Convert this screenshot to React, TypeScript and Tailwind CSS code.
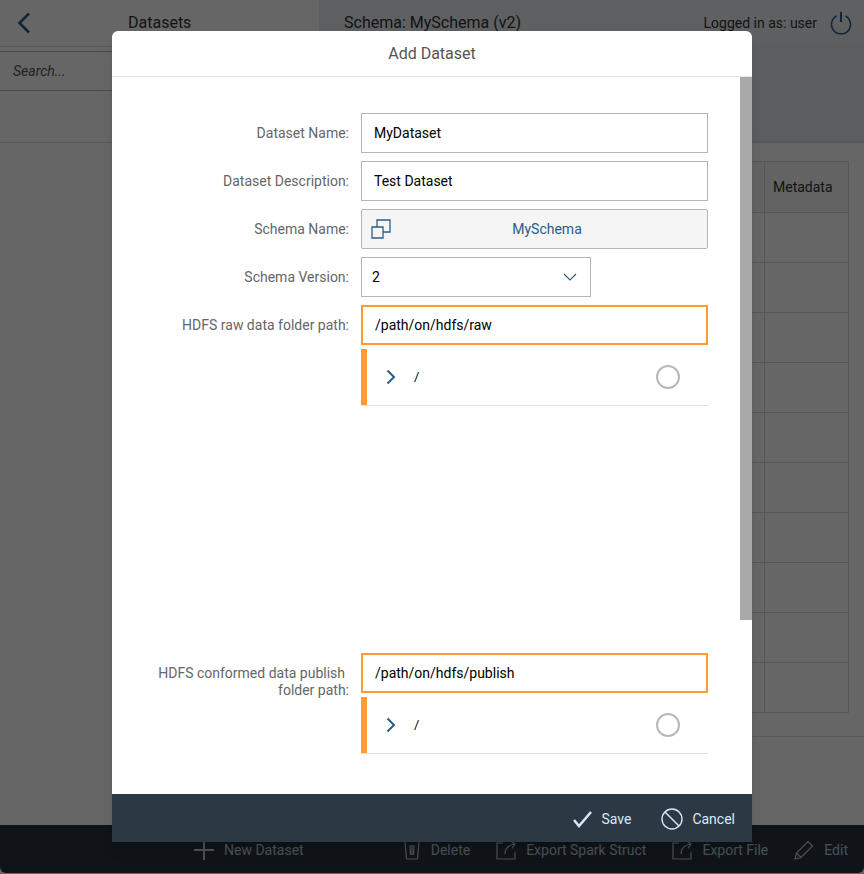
import React from "react";

const Row = ({ label, children }: { label: React.ReactNode; children: React.ReactNode }) => (
  <div className="flex items-start mb-2">
    <div className="w-[249px] h-10 shrink-0 pr-3 pt-[12px] text-right text-[#666666] leading-[17px]">{label}</div>
    {children}
  </div>
);

const Field = ({ value, orange }: { value: string; orange?: boolean }) => (
  <div className={`w-[347px] h-10 flex items-center bg-white text-black ${orange ? "border-2 border-[#ff9a36] pl-3" : "border border-[#b5b5b5] pl-3"}`}>{value}</div>
);

const Tree = () => (
  <div className="w-[347px] h-[57px] ml-[249px] mt-[-4px] flex items-center border-b border-[#e0e0e0] relative">
    <div className="w-1.5 h-[56px] bg-[#ff9a36] shrink-0" />
    <svg width="12" height="16" viewBox="0 0 12 16" className="ml-[18px]" fill="none" stroke="#2b5c87" strokeWidth="2"><path d="M2.5 1.5 9 8l-6.500 6.500" /></svg>
    <span className="ml-[17px] text-black text-[13px]">/</span>
    <div className="ml-auto mr-[28px] w-6 h-6 rounded-full border-2 border-[#b8b8b8]" />
  </div>
);

const DimBtn = ({ icon, label }: { icon: React.ReactNode; label: string }) => (
  <div className="flex items-center gap-[10px] text-[#b8c8d4]">{icon}<span>{label}</span></div>
);

const ExportIcon = () => (
  <svg width="20" height="20" viewBox="0 0 20 20" fill="none" stroke="#b8c8d4" strokeWidth="1.2"><path d="M7 3H1v16h18v-7" /><path d="M9 14c0-5 3-9 10-10M14 0.500 19 4l-3 4.500" /></svg>
);

export default function App() {
  return (
    <div className="relative w-[864px] h-[874px] overflow-hidden bg-white text-sm text-[#333333] font-['Roboto','Noto_Sans',sans-serif]">
      <div className="flex flex-col h-full pb-px">
        <div className="flex flex-1 min-h-0">
          <aside className="w-[320px] shrink-0 border-r border-[#e5e5e5] bg-white">
            <div className="h-[47px] flex items-center border-b border-[#dddddd] relative">
              <svg width="14" height="22" viewBox="0 0 14 22" className="ml-[17px]" fill="none" stroke="#2b5c87" strokeWidth="2.600"><path d="M12 1.500 2.500 11l9.500 9.500" /></svg>
              <span className="ml-[97px] text-base">Datasets</span>
            </div>
            <div className="h-[40px] mt-[4px] border-t border-b border-[#bbbbbb] flex items-center pl-[13px] italic text-[#555555]">Search...</div>
            <div className="h-[52px] border-b border-[#dddddd]" />
          </aside>
          <main className="flex-1 min-w-0 flex flex-col">
            <div className="bg-linear-to-b from-[#ecf0f2] to-[#dfe9f2]">
              <div className="h-[47px] border-b border-[#dde6ec] flex items-center pl-[24px] pr-[12px]">
                <span className="text-base">Schema: MySchema (v2)</span>
                <span className="ml-auto mr-[13px]">Logged in as: user</span>
                <svg width="22" height="24" viewBox="0 0 22 24" fill="none" stroke="#2b5c87" strokeWidth="1.500"><path d="M6.500 5a9.500 9.500 0 1 0 9 0" /><path d="M11 1v10" strokeWidth="2" /></svg>
              </div>
              <div className="h-[96px] border-b-2 border-[#cfdce6]" />
            </div>
            <div className="flex-1 pt-[18px]">
              <div className="mx-[15px] border-l border-t border-[#d8d8d8]">
                <div className="h-[51px] flex bg-[#f7f7f7] border-b border-[#d8d8d8]">
                  <div className="flex-1 border-r border-[#d8d8d8]" />
                  <div className="w-[84px] border-r border-[#d8d8d8] flex items-center pl-[8px]">Metadata</div>
                </div>
                {Array.from({ length: 10 }).map((_, i) => (
                  <div key={i} className="h-[50px] flex border-b border-[#d8d8d8]">
                    <div className="flex-1 border-r border-[#d8d8d8]" />
                    <div className="w-[84px] border-r border-[#d8d8d8]" />
                  </div>
                ))}
              </div>
              <div className="mt-[23px] h-px bg-[#d3dee8]" />
            </div>
          </main>
        </div>
        <footer className="h-[48px] pt-px bg-[#283440] flex items-center justify-end pr-[16px] shrink-0 rounded-b-md">
          <div className="flex items-center mr-auto ml-[194px]">
            <DimBtn label="New Dataset" icon={<svg width="20" height="20" viewBox="0 0 20 20" stroke="#b8c8d4" strokeWidth="2"><path d="M10 0v20M0 10h20" /></svg>} />
          </div>
          <div className="flex items-center gap-[26px]">
            <DimBtn label="Delete" icon={<svg width="18" height="20" viewBox="0 0 18 20" fill="none" stroke="#b8c8d4" strokeWidth="1.200"><path d="M0 1h18M2 1l1.500 18h11L16 1M7 5l.5 10M11 5l-.5 10M9 5v10" /></svg>} />
            <DimBtn label="Export Spark Struct" icon={<ExportIcon />} />
            <DimBtn label="Export File" icon={<ExportIcon />} />
            <DimBtn label="Edit" icon={<svg width="20" height="20" viewBox="0 0 20 20" fill="none" stroke="#b8c8d4" strokeWidth="1.200"><path d="M1 19l1.500-6L14 1.500 18.500 6 7 17.500zM2.500 13 7 17.500" /></svg>} />
          </div>
        </footer>
      </div>

      <div className="absolute inset-0 bg-black/60 flex items-start justify-center pt-[31px]">
        <div className="w-[640px] h-[811px] bg-white rounded-t-md shadow-lg flex flex-col overflow-hidden">
          <div className="h-[46px] border-b border-[#e5e5e5] flex items-center justify-center text-base text-[#555555] shrink-0">Add Dataset</div>
          <div className="flex-1 min-h-0 flex">
            <div className="flex-1 min-w-0 pt-9">
              <Row label="Dataset Name:"><Field value="MyDataset" /></Row>
              <Row label="Dataset Description:"><Field value="Test Dataset" /></Row>
              <Row label="Schema Name:">
                <div className="w-[347px] h-10 flex items-center bg-[#f5f5f5] border border-[#b5b5b5] rounded-[2px] relative">
                  <svg width="20" height="20" viewBox="0 0 20 20" className="ml-[9px]" fill="none" stroke="#2b5c87" strokeWidth="1.300"><path d="M1 8h11v11H1z" /><path d="M6 8V1h13v12h-7" /></svg>
                  <span className="absolute left-[25px] right-0 text-center text-[#2b5c87]">MySchema</span>
                </div>
              </Row>
              <Row label="Schema Version:">
                <div className="w-[230px] h-10 flex items-center bg-white border border-[#b5b5b5] pl-[10px] pr-[13px] text-black">
                  <span>2</span>
                  <svg width="14" height="8" viewBox="0 0 14 8" className="ml-auto" fill="none" stroke="#2b5c87" strokeWidth="1.200"><path d="M1 1l6 6 6-6" /></svg>
                </div>
              </Row>
              <Row label="HDFS raw data folder path:"><Field value="/path/on/hdfs/raw" orange /></Row>
              <Tree />
              <div className="h-[247px]" />
              <Row label={<><span className="pr-1">HDFS conformed data publish</span><br />folder path:</>}><Field value="/path/on/hdfs/publish" orange /></Row>
              <Tree />
            </div>
            <div className="w-3 shrink-0 flex flex-col">
              <div className="h-[543px] bg-[#a9a9a9]" />
            </div>
          </div>
          <div className="h-[48px] pt-px bg-[#2c3843] shrink-0 flex items-center justify-end pr-[17px] text-[#d5eaf8]">
            <svg width="19" height="18" viewBox="0 0 19 18" fill="none" stroke="#d5eaf8" strokeWidth="2.500"><path d="M1 10l5 6L18 2" /></svg>
            <span className="ml-[9px]">Save</span>
            <svg width="22" height="22" viewBox="0 0 22 22" fill="none" stroke="#d5eaf8" strokeWidth="1.400" className="ml-[30px]"><circle cx="11" cy="11" r="10" /><path d="M4 4l14 14" /></svg>
            <span className="ml-[9px]">Cancel</span>
          </div>
        </div>
      </div>
    </div>
  );
}
